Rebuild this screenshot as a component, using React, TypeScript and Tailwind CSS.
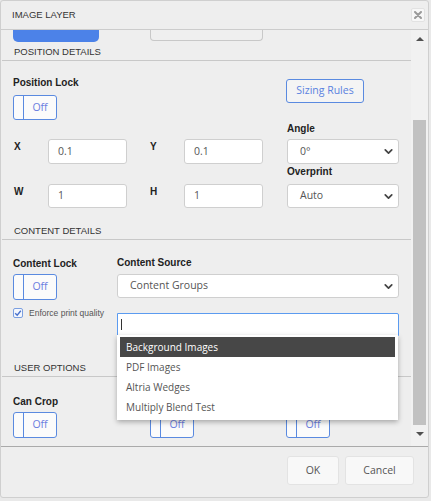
import React from 'react';
import { ChevronDown } from 'lucide-react';

function Toggle({ h }: { h: string }) {
  return (
    <div className={`flex w-[44px] ${h} rounded-[3px] border border-[#5a8ae0] bg-[#fbfbfb]`}>
      <div className="w-[10px] border-r border-[#5a8ae0]" />
      <div className="flex flex-1 items-center justify-center font-['Open_Sans',sans-serif] text-[10.5px] text-[#6a7de0]">
        Off
      </div>
    </div>
  );
}

function Input({ value, h }: { value: string; h: string }) {
  return (
    <div
      className={`flex w-[79px] ${h} items-center rounded-[3px] border border-[#cfcfcf] bg-white pl-[9px] font-['Open_Sans',sans-serif] text-[10.5px] text-[#555]`}
    >
      {value}
    </div>
  );
}

function Select({ value, h, w }: { value: string; h: string; w: string }) {
  return (
    <div
      className={`flex ${w} ${h} items-center justify-between rounded-[3px] border border-[#cfcfcf] bg-white pl-[12px] pr-[3px] font-['Open_Sans',sans-serif] text-[10.5px] text-[#555]`}
    >
      <span>{value}</span>
      <ChevronDown size={13} strokeWidth={3.2} color="#444" />
    </div>
  );
}

function SectionHeader({ title, mt }: { title: string; mt: string }) {
  return (
    <div
      className={`${mt} ml-[1px] border-b border-[#c8c8c8] pb-[1px] pl-[12px] pt-[3px] text-[9.5px] leading-[14px] text-[#333]`}
    >
      {title}
    </div>
  );
}

function Label({ text }: { text: string }) {
  return <div className="text-[10px] font-bold leading-[14px] text-[#222]">{text}</div>;
}

export default function App() {
  return (
    <div className="h-[501px] w-[431px] bg-[#e9e9e9] font-['Liberation_Sans',Arial,sans-serif]">
      <div className="flex h-[498px] w-[429px] flex-col overflow-hidden rounded-[3px] border border-[#cfcfcf] bg-[#eeeeee]">
        {/* Header */}
        <div className="flex h-[29px] shrink-0 items-center justify-between border-b border-[#cccccc] pl-[11px] pr-[3px]">
          <span className="text-[9.5px] text-[#333]">IMAGE LAYER</span>
          <div className="flex h-[14px] w-[14px] items-center justify-center rounded-[2px] border border-[#e2e2e2] bg-[#f7f7f7]">
            <svg width="8" height="8" viewBox="0 0 8 8">
              <path d="M1 1 L7 7 M7 1 L1 7" stroke="#9a9a9a" strokeWidth="2" strokeLinecap="round" />
            </svg>
          </div>
        </div>

        {/* Body */}
        <div className="flex h-[417px] shrink-0 border-b border-[#aaaaaa]">
          <div className="flex w-[410px] flex-col overflow-hidden">
            {/* Clipped top row */}
            <div className="flex h-[12px] shrink-0">
              <div className="ml-[12px] h-[12px] w-[86px] rounded-b-[5px] bg-[#4c82e8]" />
              <div className="ml-[51px] h-[11px] w-[113px] rounded-b-[4px] border border-t-0 border-[#c8c8c8] bg-[#efefef]" />
            </div>

            <SectionHeader title="POSITION DETAILS" mt="mt-0" />

            {/* Position details */}
            <div className="flex flex-col pl-[12px]">
              <div className="mt-[15px] flex">
                <div className="w-[273px]">
                  <Label text="Position Lock" />
                  <div className="mt-[5px]">
                    <Toggle h="h-[25px]" />
                  </div>
                </div>
                <div className="mt-[3px] flex h-[24px] w-[78px] items-center justify-center rounded-[3px] border border-[#5a8ae0] bg-[#f4f4f4] font-['Open_Sans',sans-serif] text-[10.5px] text-[#5a82e0]">
                  Sizing Rules
                </div>
              </div>

              <div className="mt-[2px] flex items-end">
                <div className="h-[25px] w-[35px] pl-[1px] pt-[1px] text-[10px] font-bold leading-[14px] text-[#222]">X</div>
                <Input value="0.1" h="h-[25px]" />
                <div className="ml-[23px] h-[25px] w-[34px] pt-[1px] text-[10px] font-bold leading-[14px] text-[#222]">Y</div>
                <Input value="0.1" h="h-[25px]" />
                <div className="ml-[24px] w-[112px]">
                  <Label text="Angle" />
                  <div className="mt-[3px]">
                    <Select value="0°" h="h-[25px]" w="w-[112px]" />
                  </div>
                </div>
              </div>

              <div className="mt-[1px] flex items-end">
                <div className="h-[24px] w-[35px] pl-[1px] pt-[1px] text-[10px] font-bold leading-[14px] text-[#222]">W</div>
                <Input value="1" h="h-[24px]" />
                <div className="ml-[23px] h-[24px] w-[34px] pt-[1px] text-[10px] font-bold leading-[14px] text-[#222]">H</div>
                <Input value="1" h="h-[24px]" />
                <div className="ml-[24px] w-[112px]">
                  <Label text="Overprint" />
                  <div className="mt-[5px]">
                    <Select value="Auto" h="h-[24px]" w="w-[112px]" />
                  </div>
                </div>
              </div>
            </div>

            <SectionHeader title="CONTENT DETAILS" mt="mt-[13px]" />

            {/* Content details */}
            <div className="mt-[16px] flex pl-[12px]">
              <div className="w-[104px]">
                <div className="mt-[1px]">
                  <Label text="Content Lock" />
                </div>
                <div className="mt-[3px]">
                  <Toggle h="h-[26px]" />
                </div>
                <div className="mt-[8px] flex h-[10px] items-center gap-[6px]">
                  <div className="flex h-[10px] w-[10px] items-center justify-center rounded-[2px] border border-[#7b9fe0] bg-[#f4f7fd]">
                    <svg width="8" height="8" viewBox="0 0 8 8">
                      <path d="M1.2 4.2 L3.2 6.2 L6.8 1.8" stroke="#4a72cc" strokeWidth="1.4" fill="none" />
                    </svg>
                  </div>
                  <span className="text-[8.5px] text-[#555]">Enforce print quality</span>
                </div>
              </div>
              <div className="relative w-[282px]">
                <Label text="Content Source" />
                <div className="mt-[4px]">
                  <Select value="Content Groups" h="h-[24px]" w="w-[282px]" />
                </div>

                {/* Open dropdown */}
                <div className="absolute left-0 top-[57px] z-10 w-[282px]">
                  <div className="flex h-[23px] w-[282px] items-center rounded-tr-[2px] border border-[#5b9bf0] bg-white pl-[3px]">
                    <div className="h-[11px] w-px bg-[#333]" />
                  </div>
                  <div className="-mt-px w-[281px] bg-white px-[3px] pb-[3px] pt-[2px] font-['Open_Sans',sans-serif] text-[10px] text-[#555] shadow-[0_2px_5px_rgba(0,0,0,0.3)]">
                    <div className="h-[20px] bg-[#474747] pl-[6px] leading-[20px] text-white">Background Images</div>
                    <div className="h-[20px] pl-[6px] leading-[20px]">PDF Images</div>
                    <div className="h-[20px] pl-[6px] leading-[20px]">Altria Wedges</div>
                    <div className="h-[20px] pl-[6px] leading-[20px]">Multiply Blend Test</div>
                  </div>
                </div>
              </div>
            </div>

            <SectionHeader title="USER OPTIONS" mt="mt-[40px]" />

            {/* User options */}
            <div className="mt-[18px] flex pl-[12px]">
              <div className="w-[137px]">
                <Label text="Can Crop" />
                <div className="mt-[3px]">
                  <Toggle h="h-[26px]" />
                </div>
              </div>
              <div className="w-[136px]">
                <div className="h-[14px]" />
                <div className="mt-[3px]">
                  <Toggle h="h-[26px]" />
                </div>
              </div>
              <div className="w-[112px]">
                <div className="h-[14px]" />
                <div className="mt-[3px]">
                  <Toggle h="h-[26px]" />
                </div>
              </div>
            </div>
          </div>

          {/* Scrollbar */}
          <div className="flex w-[17px] flex-col bg-[#f1f1f1]">
            <div className="flex h-[17px] items-center justify-center">
              <svg width="8" height="4" viewBox="0 0 8 4">
                <path d="M0 4 L4 0 L8 4 Z" fill="#505050" />
              </svg>
            </div>
            <div className="flex flex-1 flex-col items-center">
              <div className="mt-[73px] w-[13px] flex-1 bg-[#c1c1c1]" />
            </div>
            <div className="flex h-[17px] items-center justify-center">
              <svg width="8" height="4" viewBox="0 0 8 4">
                <path d="M0 0 L8 0 L4 4 Z" fill="#505050" />
              </svg>
            </div>
            <div className="h-[4px]" />
          </div>
        </div>

        {/* Footer */}
        <div className="flex flex-1 items-start justify-end gap-[6px] pr-[14px] pt-[9px] font-['Open_Sans',sans-serif] text-[10.5px] text-[#555]">
          <div className="flex h-[29px] w-[52px] items-center justify-center rounded-[3px] border border-[#e3e3e3] bg-[#f8f8f8]">
            OK
          </div>
          <div className="flex h-[29px] w-[69px] items-center justify-center rounded-[3px] border border-[#e3e3e3] bg-[#f8f8f8]">
            Cancel
          </div>
        </div>
      </div>
    </div>
  );
}
